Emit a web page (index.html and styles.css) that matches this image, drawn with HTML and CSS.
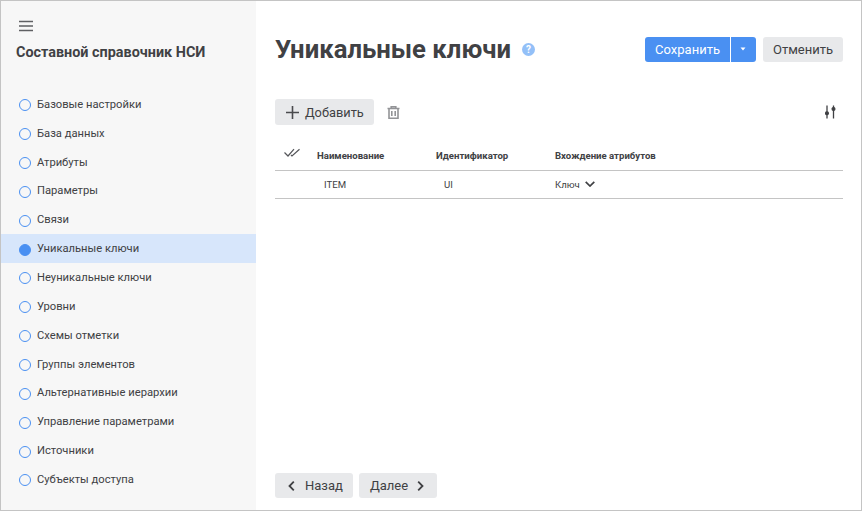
FILE: index.html
```html
<!DOCTYPE html>
<html lang="ru">
<head>
    <meta charset="UTF-8">
    <title>Уникальные ключи</title>
    <link rel="stylesheet" href="styles.css">
</head>
<body>
    <div class="window">
        <aside class="sidebar">
            <div class="menu-icon">
                <svg width="14" height="12" viewBox="0 0 14 12"><path d="M0 1.5h14M0 6h14M0 10.5h14" stroke="#5f6063" stroke-width="1.4" fill="none"/></svg>
            </div>
            <div class="sidebar-title">Составной справочник НСИ</div>
            <ul class="steps">
                <li class="step">Базовые настройки</li>
                <li class="step">База данных</li>
                <li class="step">Атрибуты</li>
                <li class="step">Параметры</li>
                <li class="step">Связи</li>
                <li class="step active">Уникальные ключи</li>
                <li class="step">Неуникальные ключи</li>
                <li class="step">Уровни</li>
                <li class="step">Схемы отметки</li>
                <li class="step">Группы элементов</li>
                <li class="step">Альтернативные иерархии</li>
                <li class="step">Управление параметрами</li>
                <li class="step">Источники</li>
                <li class="step">Субъекты доступа</li>
            </ul>
        </aside>
        <main class="content">
            <div class="header">
                <h1 class="page-title">Уникальные ключи</h1>
                <span class="help">?</span>
                <div class="header-actions">
                    <div class="split">
                        <button class="btn primary save">Сохранить</button>
                        <button class="btn primary caret"><svg width="6" height="4" viewBox="0 0 6 4"><path d="M0.5 0.5h5L3 3.5z" fill="#fff"/></svg></button>
                    </div>
                    <button class="btn">Отменить</button>
                </div>
            </div>
            <div class="toolbar">
                <button class="btn add">
                    <svg width="13" height="13" viewBox="0 0 13 13"><path d="M6.5 0v13M0 6.5h13" stroke="#4a4b4e" stroke-width="1.6" fill="none"/></svg>
                    Добавить
                </button>
                <svg class="trash" width="13" height="13" viewBox="0 0 13 13"><path d="M0.5 2.5h12M4.2 2.5V0.7h4.6v1.8M2 2.5v9.8h9V2.5M4.8 5v5M8.2 5v5" stroke="#939497" stroke-width="1.6" fill="none"/></svg>
                <svg class="settings" width="12" height="14" viewBox="0 0 12 14"><g stroke="#404144" stroke-width="1.3" fill="#404144"><path d="M2 0.5v13M8.5 0.5v13"/><circle cx="2" cy="8.3" r="1.4"/><circle cx="8.5" cy="4" r="1.4"/></g></svg>
            </div>
            <table class="grid">
                <thead>
                    <tr>
                        <th class="col-check">
                            <svg width="16" height="9" viewBox="0 0 16 9"><path d="M0.5 4.5l3.5 3.5L10 1.2M7 7l1 1L15.5 1.2" stroke="#55565a" stroke-width="1.2" fill="none"/></svg>
                        </th>
                        <th class="col-name">Наименование</th>
                        <th class="col-id">Идентификатор</th>
                        <th>Вхождение атрибутов</th>
                    </tr>
                </thead>
                <tbody>
                    <tr>
                        <td></td>
                        <td class="cell-name">ITEM</td>
                        <td class="cell-id">UI</td>
                        <td>
                            <span class="attr">Ключ
                                <svg width="10" height="6" viewBox="0 0 10 6"><path d="M0.7 0.8L5 5l4.3-4.2" stroke="#404144" stroke-width="1.7" fill="none"/></svg>
                            </span>
                        </td>
                    </tr>
                </tbody>
            </table>
            <div class="footer">
                <button class="btn nav back">
                    <svg width="7" height="10" viewBox="0 0 7 10"><path d="M5.8 0.7L1.5 5l4.3 4.3" stroke="#404144" stroke-width="1.8" fill="none"/></svg>
                    Назад
                </button>
                <button class="btn nav next">
                    Далее
                    <svg width="7" height="10" viewBox="0 0 7 10"><path d="M1.2 0.7L5.5 5 1.2 9.3" stroke="#404144" stroke-width="1.8" fill="none"/></svg>
                </button>
            </div>
        </main>
    </div>
</body>
</html>
```

FILE: styles.css
```css
html, body {
    margin: 0;
    padding: 0;
}

body {
    font-family: Roboto, 'Liberation Sans', sans-serif;
    color: #404144;
    background: #fff;
}

.window {
    display: flex;
    width: 862px;
    height: 511px;
    box-sizing: border-box;
    border: 1px solid #c4c4c4;
    overflow: hidden;
}

.sidebar {
    flex: 0 0 255px;
    background: #f7f7f7;
}

.menu-icon {
    height: 12px;
    padding: 19px 0 0 18px;
    line-height: 0;
}

.sidebar-title {
    margin: 13px 0 0 15px;
    font-size: 14.4px;
    font-weight: 700;
    line-height: 16px;
}

.steps {
    list-style: none;
    margin: 29px 0 0;
    padding: 0;
}

.step {
    display: flex;
    align-items: center;
    height: 28.85px;
    padding-left: 36px;
    font-size: 11.2px;
    position: relative;
}

.step::before {
    content: "";
    position: absolute;
    left: 18px;
    top: 50%;
    width: 10px;
    height: 10px;
    margin-top: -5px;
    border: 1px solid #4a90f2;
    border-radius: 50%;
}

.step.active {
    background: #d7e6fb;
}

.step.active::before {
    background: #4a90f2;
}

.content {
    flex: 1;
    display: flex;
    flex-direction: column;
    padding: 0 18px 12px 19px;
    min-width: 0;
}

.header {
    display: flex;
    align-items: center;
    height: 36px;
    margin-top: 30px;
}

.page-title {
    margin: 0;
    font-size: 25.7px;
    font-weight: 700;
    line-height: 36px;
}

.help {
    width: 13px;
    height: 13px;
    margin-left: 11px;
    border-radius: 50%;
    background: #93c0f8;
    color: #fff;
    font-size: 10px;
    font-weight: 700;
    line-height: 13px;
    text-align: center;
}

.header-actions {
    display: flex;
    gap: 7px;
    margin-left: auto;
}

.split {
    display: flex;
    gap: 1px;
}

.btn {
    display: inline-flex;
    align-items: center;
    height: 25px;
    padding: 0 10px;
    border: 0;
    border-radius: 3px;
    background: #e8e9eb;
    color: #404144;
    font-family: inherit;
    font-size: 13px;
}

.btn.primary {
    background: #4a90f2;
    color: #fff;
}

.save {
    border-radius: 3px 0 0 3px;
}

.caret {
    width: 25px;
    justify-content: center;
    padding: 0;
    border-radius: 0 3px 3px 0;
}

.toolbar {
    display: flex;
    align-items: center;
    height: 26px;
    margin-top: 32px;
}

.add {
    gap: 6px;
    height: 26px;
    padding: 0 10px 0 11px;
    font-size: 12.8px;
}

.trash {
    margin-left: 13px;
}

.settings {
    margin-left: auto;
    margin-right: 6px;
}

.grid {
    width: 100%;
    margin-top: 15px;
    border-collapse: collapse;
    table-layout: fixed;
    font-size: 9.6px;
}

.grid th {
    height: 30px;
    padding: 0;
    border-bottom: 1px solid #c4c4c4;
    font-weight: 700;
    text-align: left;
}

.grid td {
    height: 26px;
    padding: 0 0 1px;
    border-bottom: 1px solid #c4c4c4;
}

.col-check {
    width: 42px;
    line-height: 0;
}

.col-check svg {
    margin: 0 0 5px 9px;
}

.col-name,
.col-id {
    width: 119px;
}

.grid .cell-name {
    padding-left: 7px;
}

.grid .cell-id {
    padding-left: 8px;
}

.attr {
    display: inline-flex;
    align-items: center;
    gap: 5px;
}

.footer {
    display: flex;
    gap: 6px;
    margin-top: auto;
}

.nav {
    height: 25px;
}

.back {
    gap: 10px;
    padding: 0 10px 0 13px;
}

.next {
    gap: 9px;
    padding: 0 13px 0 11px;
}
```
